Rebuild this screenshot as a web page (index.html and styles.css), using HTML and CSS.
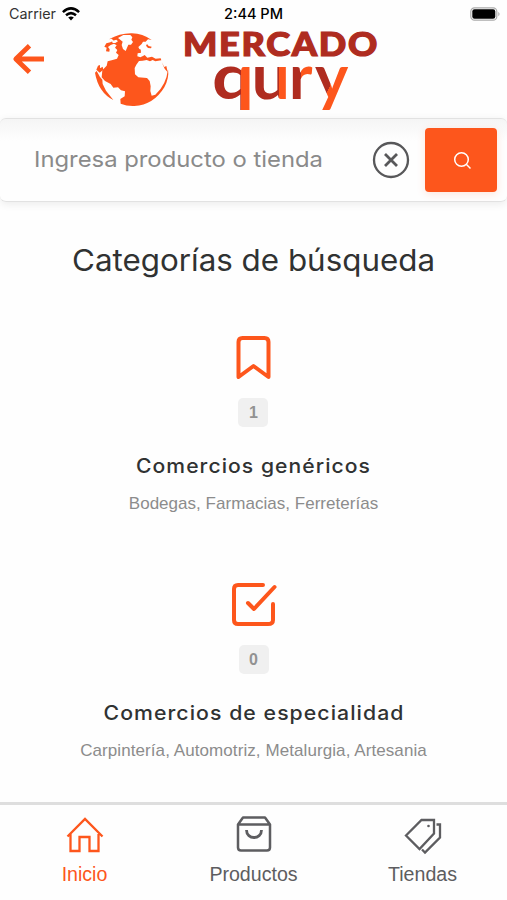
FILE: index.html
```
<!DOCTYPE html>
<html lang="es">
<head>
<meta charset="utf-8">
<meta name="viewport" content="width=device-width, initial-scale=1">
<title>Mercado Qury</title>
<link rel="stylesheet" href="styles.css">
</head>
<body>
<div class="app">
  <div class="status">
    <div class="carrier">
      <svg class="carrier-label" width="48" height="18"><text x="0" y="14" textLength="47" lengthAdjust="spacingAndGlyphs">Carrier</text></svg>
      <svg width="18" height="14" viewBox="0 0 18 14" fill="none" stroke="#000" stroke-width="2.5"><path d="M.9 5.1Q9-2.4 17.1 5.1M4 8.3q5-4.3 10 0"/><path d="M6.2 10.6Q9 8.2 11.8 10.6L9 13.5z" fill="#000" stroke="none"/></svg>
    </div>
    <svg class="time" width="62" height="18"><text x="0" y="14" textLength="59" lengthAdjust="spacingAndGlyphs">2:44 PM</text></svg>
    <svg class="battery" width="31" height="14" viewBox="0 0 31 14"><rect x=".8" y=".8" width="26" height="12.4" rx="3.7" fill="#fff" stroke="#aaa" stroke-width="1.2"/><rect x="2.3" y="2.2" width="23" height="9.6" rx="2.2"/><path d="M28.3 4.7q2.5 2.3 0 4.6z" fill="#aaa"/></svg>
  </div>

  <header class="header">
    <svg class="back" width="32" height="32" viewBox="0 0 32 32" fill="none" stroke="#fd561c" stroke-width="4.8"><path d="M32 16H4M17.500 2.800 3.800 16l13.700 13.200" stroke-linejoin="round"/></svg>
    <svg class="globe" width="85" height="85" viewBox="0 0 255 255" fill="#fd561c">
      <path d="M57 43Q90 24 126 25Q158 26 185 45L174 43 167 50 159 50 155 57 145 66 148 72 154 75 153 83 143 85 142 94 151 97 159 93 164 90 172 98 186 95 197 101 212 100 214 106 196 109 188 105 180 109 170 105 158 107 147 108 139 119 134 129 135 148 145 157 171 159 179 168 182 184 181 198 185 212 196 209Q229 180 234 132Q238 159 223 187Q191 240 133 243Q111 244 92 236L91 222 104 214 105 199 93 196 84 187 70 188 62 177 45 168 35 157 37 136 50 122 53 109 65 106 81 101 86 90 78 83 82 75 75 68 80 61 72 56 62 60 54 66 59 73 58 80 48 79 50 68 43 65 49 55 61 52 71 47 65 41z"/>
      <path d="M15 143L20 138 30 156 37 164 38 177 48 197 70 225Q25 202 15 143zM19 134l5-12 6-2 0 10 8-5 2 9-11 9z"/>
      <g fill="#fefefe">
        <path d="M84 39l16-9 21 0 6 7-3 7 5 7-6 8-8 0-8 19-8-6-4-12 3-10-9-7z"/>
        <path d="M166 53l9-9 9 2 7 12-7 12-8 2-4-8-6-1zM154 70l7-3 4 8-7 8-6-4zM66 48l13-4 5 5-8 5-8 0zM229 121l5-6 1 13-3 8z"/>
      </g>
      <path d="M171 57l5 6 9 2-2 5-9-1-6-7zM215 111l8 15 6-3 4 19-9-11z"/>
    </svg>
    <svg class="wordmark" width="200" height="90" viewBox="0 0 200 90" role="img" aria-label="Mercado Qury">
      <defs>
        <linearGradient id="tone" gradientUnits="userSpaceOnUse" x1="0" y1="0" x2="200" y2="0">
          <stop offset=".292" stop-color="#af2c20"/><stop offset=".292" stop-color="#fd561c"/>
          <stop offset=".345" stop-color="#fd561c"/><stop offset=".345" stop-color="#af2c20"/>
          <stop offset=".478" stop-color="#af2c20"/><stop offset=".478" stop-color="#fd561c"/>
          <stop offset=".535" stop-color="#fd561c"/><stop offset=".535" stop-color="#af2c20"/>
          <stop offset=".591" stop-color="#af2c20"/><stop offset=".591" stop-color="#fd561c"/>
        </linearGradient>
        <linearGradient id="tail" gradientUnits="userSpaceOnUse" x1="147" y1="35.500" x2="164" y2="43">
          <stop offset=".5" stop-color="#af2c20"/><stop offset=".5" stop-color="#fd561c"/>
        </linearGradient>
      </defs>
      <text class="mercado" x="0" y="28.500" textLength="196" lengthAdjust="spacingAndGlyphs">MERCADO</text>
      <text class="qury" x="29" y="72" textLength="42" lengthAdjust="spacingAndGlyphs" fill="url(#tone)">q</text>
      <text class="qury" x="68.500" y="72" textLength="38.500" lengthAdjust="spacingAndGlyphs" fill="url(#tone)">u</text>
      <text class="qury" x="106" y="72" fill="url(#tone)">r</text>
      <text class="qury" x="132" y="72" fill="url(#tail)">y</text>
    </svg>
  </header>

  <div class="search">
    <svg class="placeholder" width="330" height="36"><text x="0" y="25" textLength="289" lengthAdjust="spacingAndGlyphs">Ingresa producto o tienda</text></svg>
    <svg class="clear" width="38" height="38" viewBox="0 0 38 38" fill="none" stroke="#58585a"><circle cx="19" cy="19" r="17" stroke-width="2.300"/><path d="M13 13l12 12M25 13 13 25" stroke-width="2.800"/></svg>
    <button class="go" aria-label="Buscar"><svg width="20" height="20" viewBox="0 0 20 20" fill="none" stroke="#fff" stroke-width="1.500"><circle cx="9.500" cy="9.500" r="6.800"/><path d="M14.500 14.500l4 4"/></svg></button>
  </div>

  <main class="main">
    <h1 class="title"><svg width="366" height="46"><text x="1" y="33" textLength="363" lengthAdjust="spacingAndGlyphs">Categorías de búsqueda</text></svg></h1>
    <section class="category">
      <svg class="cat-icon" width="48" height="48" viewBox="0 0 48 48" fill="none" stroke="#fd561c" stroke-width="4" stroke-linejoin="round"><path d="M9.500 43V8q0-4 4-4h22q4 0 4 4v35l-15-11z"/></svg>
      <span class="count">1</span>
      <h2 class="name"><svg width="240" height="32"><text x="3" y="22.500" textLength="235" lengthAdjust="spacingAndGlyphs">Comercios genéricos</text></svg></h2>
      <p class="desc">Bodegas, Farmacias, Ferreterías</p>
    </section>
    <section class="category">
      <svg class="cat-icon" width="48" height="48" viewBox="0 0 48 48" fill="none" stroke="#fd561c" stroke-width="4" stroke-linecap="round" stroke-linejoin="round"><path d="M33 4H8q-4 0-4 4v31q0 4 4 4h30q5 0 5-4V23M44.500 6 24 28l-6-6"/></svg>
      <span class="count">0</span>
      <h2 class="name"><svg width="306" height="32"><text x="2.500" y="22.500" textLength="301" lengthAdjust="spacingAndGlyphs">Comercios de especialidad</text></svg></h2>
      <p class="desc wide">Carpintería, Automotriz, Metalurgia, Artesania</p>
    </section>
  </main>

  <nav class="tabs">
    <a class="tab active"><svg width="40" height="40" viewBox="0 0 40 40" fill="none" stroke="currentColor" stroke-width="2.300"><path d="M2.500 21.500 20 4l17.500 17.500M5.500 19v17h9V22h10v14h9V19"/></svg><span>Inicio</span></a>
    <a class="tab"><svg width="40" height="40" viewBox="0 0 40 40" fill="none" stroke="currentColor" stroke-width="2.500" stroke-linejoin="round"><path d="M4 9.500 9 2.500h22l5 7v23q0 3-3 3H7q-3 0-3-3zM4 9.500h32"/><path d="M12.500 15c0 10 15 10 15 0" stroke-width="2.800"/></svg><span>Productos</span></a>
    <a class="tab"><svg width="40" height="40" viewBox="0 0 40 40" fill="none" stroke="currentColor" stroke-width="2.300"><path d="M3 20.500 18.500 5H31v13.500L16.500 34zM33.500 9.500H37v13L22 37.500l-3-3"/><circle cx="25.500" cy="11" r="1.300" fill="currentColor" stroke="none"/></svg><span>Tiendas</span></a>
  </nav>
</div>
</body>
</html>
```
FILE: styles.css
```
* { box-sizing: border-box; }
body { margin: 0; background: #fff; font-family: "Liberation Sans", Arial, sans-serif; }
svg { display: block; flex: none; overflow: visible; }
.app { width: 507px; height: 900px; display: flex; flex-direction: column; overflow: hidden; background: #fefefe; }

.status { height: 27px; flex: none; display: grid; grid-template-columns: 1fr 62px 1fr; align-items: center; padding: 0 6px 0 9px; font-family: Inter, sans-serif; font-size: 14px; }
.carrier { display: flex; align-items: center; gap: 5px; }
.carrier-label { fill: #333; }
.time { font-weight: 500; }
.battery { justify-self: end; }

.header { height: 91px; flex: none; display: flex; align-items: flex-start; padding-left: 12px; }
.back { margin-top: 16px; }
.globe { margin: -2px 0 0 46px; }
.wordmark { margin-left: 8px; }
.mercado { font: 900 32px Lato, sans-serif; letter-spacing: 1.5px; fill: #af2c20; stroke: #af2c20; stroke-width: 1.2; }
.qury { font: 700 63px Lato, sans-serif; }

.search { height: 84px; flex: none; display: flex; align-items: center; padding: 0 10px 0 34px; border: solid #e2e2e2; border-width: 1px 0; border-radius: 6px; background: linear-gradient(#f5f5f5, #fefefe 22px); box-shadow: 0 2px 8px #00000014; }
.placeholder { font: 400 22px Inter, sans-serif; fill: #8a8a8a; }
.clear { margin-left: 8px; }
.go { width: 72px; height: 64px; margin-left: 15px; padding: 0 0 0 2px; border: 0; border-radius: 4px; background: #fd561c; display: grid; place-items: center; box-shadow: 0 2px 8px #fd561c26; }

.main { flex: 1; display: flex; flex-direction: column; align-items: center; padding-top: 36px; }
.title { margin: 0; font: 400 30px Inter, sans-serif; fill: #303232; }
.category { height: 247px; flex: none; display: flex; flex-direction: column; align-items: center; padding-top: 50px; }
.count { width: 30px; height: 29px; margin-top: 16px; border-radius: 5px; background: #f0f0f0; color: #929292; font-size: 16px; font-weight: 700; line-height: 29px; text-align: center; }
.name { margin: 23px 0 0; font: 500 20px Inter, sans-serif; letter-spacing: 1px; fill: #303232; }
.desc { margin: 11px 0 0; color: #8c8c8c; font-size: 17px; line-height: 22px; letter-spacing: .03px; }
.wide { letter-spacing: .08px; }

.tabs { height: 98px; flex: none; display: grid; grid-template-columns: repeat(3, 169px); border-top: 3px solid #dedede; background: #fefefe; }
.tab { display: flex; flex-direction: column; align-items: center; padding-top: 10px; color: #5d5d60; font-size: 19.6px; line-height: 24px; }
.tab span { margin-top: 7px; }
.active { color: #fd561c; }
```
